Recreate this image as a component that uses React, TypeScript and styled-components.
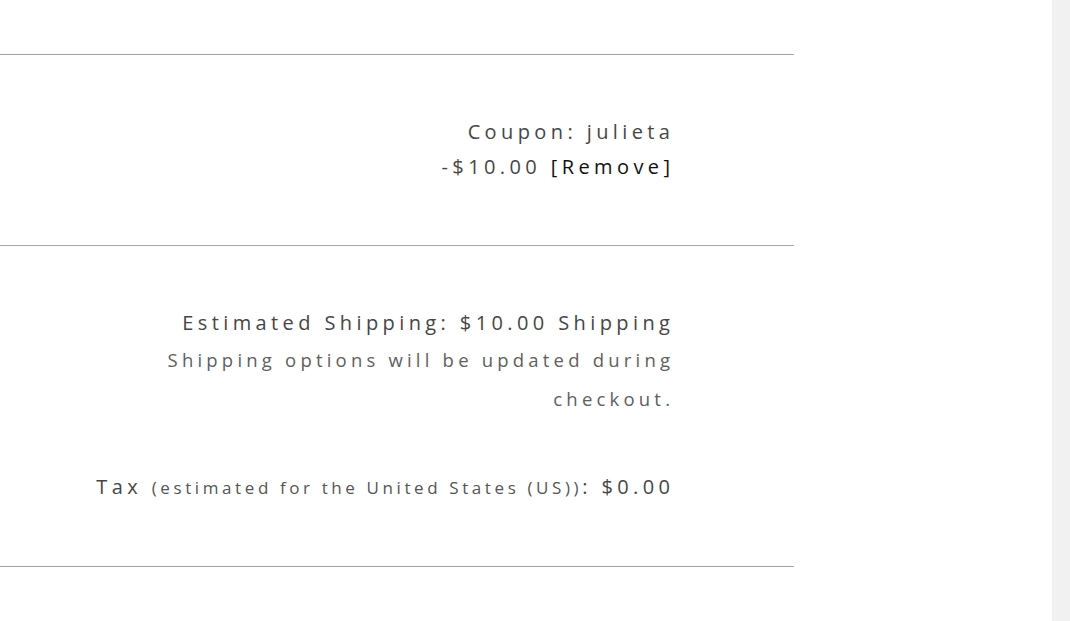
import styled, { createGlobalStyle } from "styled-components";

const GlobalStyle = createGlobalStyle`
  html, body {
    margin: 0;
    padding: 0;
    background: #fff;
  }
  body {
    font-family: "Open Sans", "Noto Sans", sans-serif;
  }
`;

const Page = styled.div`
  display: flex;
  height: 621px;
  overflow: hidden;
`;

const Main = styled.div`
  flex: 1;
`;

const ScrollTrack = styled.div`
  width: 18px;
  background: #f1f1f1;
`;

const Totals = styled.div`
  width: 794px;
`;

const Row = styled.div<{ height: number; padTop: number }>`
  box-sizing: border-box;
  height: ${(p) => p.height}px;
  padding: ${(p) => p.padTop}px 121px 0 0;
  border-bottom: 1px solid #a3a3a3;
  display: flex;
  justify-content: flex-end;
`;

const Cell = styled.div`
  width: 592px;
  text-align: right;
  color: #464646;
  letter-spacing: 4.4px;
`;

const Line = styled.div<{ size: number; lh: number }>`
  font-size: ${(p) => p.size}px;
  line-height: ${(p) => p.lh}px;
  margin-right: -1.4px;
`;

const Small = styled.span`
  font-size: 17px;
  letter-spacing: 3.6px;
  color: #555;
`;

const Note = styled.div`
  font-size: 18.5px;
  line-height: 39px;
  margin: -2px -1.2px 0 0;
  color: #606060;
  letter-spacing: 4.2px;
`;

const RemoveLink = styled.a`
  color: #111;
  text-decoration: none;
  cursor: pointer;
`;

const Spacer = styled.div`
  height: 50px;
`;

export default function App() {
  return (
    <Page>
      <GlobalStyle />
      <Main>
        <Totals>
          <Row height={55} padTop={0} />
          <Row height={191} padTop={59}>
            <Cell>
              <Line size={20} lh={35}>Coupon: julieta</Line>
              <Line size={20} lh={35}>
                -$10.00 <RemoveLink>[Remove]</RemoveLink>
              </Line>
            </Cell>
          </Row>
          <Row height={321} padTop={58}>
            <Cell>
              <Line size={20} lh={38}>Estimated Shipping: $10.00 Shipping</Line>
              <Note>Shipping options will be updated during checkout.</Note>
              <Spacer />
              <Line size={20} lh={38}>
                Tax <Small>(estimated for the United States (US))</Small>: $0.00
              </Line>
            </Cell>
          </Row>
        </Totals>
      </Main>
      <ScrollTrack />
    </Page>
  );
}
